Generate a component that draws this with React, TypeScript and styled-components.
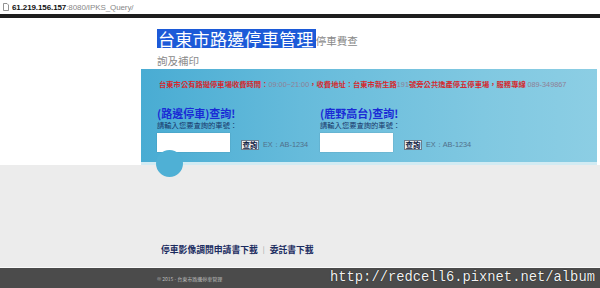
import React from "react";
import styled, { createGlobalStyle } from "styled-components";

const Global = createGlobalStyle`
  html, body { margin: 0; padding: 0; background: #fff; }
  body { width: 600px; height: 288px; overflow: hidden; font-family: "Noto Sans CJK TC", "Liberation Sans", sans-serif; }
  #root { width: 600px; height: 288px; }
`;

const Page = styled.div`
  width: 600px;
  height: 288px;
  display: flex;
  flex-direction: column;
  background: #fff;
`;

const AddressBar = styled.div`
  height: 14px;
  display: flex;
  align-items: center;
  gap: 3px;
  padding-left: 3px;
  background: #fff;
  border-bottom: 4px solid #1e1e1e;
  font-family: "Liberation Sans", Arial, sans-serif;
  font-size: 8px;
  letter-spacing: -0.1px;
`;

const PageIcon = styled.svg`
  width: 6px;
  height: 8px;
`;

const Host = styled.span`
  color: #111;
  font-weight: bold;
`;

const Path = styled.span`
  color: #888;
`;

const Header = styled.div`
  padding: 11px 0 0 157px;
  height: 40px;
  box-sizing: content-box;
`;

const TitleLine = styled.div`
  display: flex;
  align-items: flex-end;
  height: 19px;
`;

const Selected = styled.span`
  background: #1c5ad8;
  color: #fff;
  font-size: 17px;
  line-height: 19px;
  height: 19px;
  padding: 0 2px 0 1px;
  letter-spacing: 0.3px;
  white-space: nowrap;
`;

const SubTitle = styled.span<{ $block?: boolean }>`
  display: ${(p) => (p.$block ? "block" : "inline")};
  color: #8a8a8a;
  font-size: 10.5px;
  line-height: 12px;
  margin-top: ${(p) => (p.$block ? "7px" : "0")};
  margin-bottom: ${(p) => (p.$block ? "0" : "1px")};
  white-space: nowrap;
`;

const PanelWrap = styled.div`
  position: relative;
  margin-left: 141px;
  width: 456px;
`;

const Panel = styled.div`
  height: 96px;
  box-sizing: border-box;
  padding: 10px 0 0 16px;
  background: linear-gradient(to right, #49acd3 0%, #66bbdb 35%, #80c8e1 75%, #8ccee4 100%);
  border-bottom: 3px solid #d2ebf3;
`;

const Tab = styled.div`
  position: absolute;
  left: 15px;
  top: 81px;
  width: 27px;
  height: 27px;
  border-radius: 50%;
  background: #4fb0d5;
`;

const Notice = styled.div`
  font-size: 7.3px;
  line-height: 10px;
  color: #d42a2f;
  font-weight: bold;
  padding-left: 2px;
  white-space: nowrap;
`;

const Num = styled.span`
  color: #8f7f95;
  font-weight: normal;
  font-family: "Liberation Sans", Arial, sans-serif;
`;

const Queries = styled.div`
  display: flex;
  margin-top: 16px;
`;

const Query = styled.div`
  width: 163px;
  display: flex;
  flex-direction: column;
`;

const QTitle = styled.div`
  font-size: 11px;
  line-height: 14px;
  font-weight: bold;
  color: #1a2bd6;
  white-space: nowrap;
`;

const QHint = styled.div`
  font-size: 7.3px;
  line-height: 10px;
  color: #17356a;
  white-space: nowrap;
`;

const QRow = styled.div`
  display: flex;
  align-items: flex-end;
  margin-top: 3px;
`;

const Plate = styled.div`
  width: 73px;
  height: 19px;
  background: #fff;
  box-shadow: 0 0 1px rgba(0, 0, 0, 0.25);
`;

const SearchBtn = styled.div`
  margin-left: 11px;
  margin-bottom: 2px;
  width: 18px;
  height: 10px;
  box-sizing: border-box;
  border: 1px solid #6b7c8c;
  background: #e9edf0;
  color: #112244;
  font-size: 7.5px;
  font-weight: bold;
  line-height: 8px;
  text-align: center;
  white-space: nowrap;
  overflow: hidden;
`;

const Example = styled.div`
  margin-left: 4px;
  margin-bottom: 2px;
  font-family: "Liberation Sans", Arial, sans-serif;
  font-size: 7.3px;
  line-height: 10px;
  color: #51708a;
  white-space: nowrap;
`;

const Lower = styled.div`
  flex: 1;
  background: #ececec;
  display: flex;
  flex-direction: column;
  justify-content: flex-end;
  border-bottom: 1px solid #fafafa;
`;

const Links = styled.div`
  padding: 0 0 12px 161px;
  display: flex;
  align-items: center;
  gap: 5px;
  font-size: 8.8px;
  line-height: 11px;
  font-weight: bold;
  color: #1a2b60;
`;

const Sep = styled.span`
  color: #999;
  font-weight: normal;
  font-size: 7px;
`;

const Footer = styled.div`
  height: 20px;
  background: #4b4b4b;
  display: flex;
  align-items: center;
  padding-left: 157px;
`;

const Copy = styled.span`
  font-size: 5px;
  color: #bdbdbd;
  white-space: nowrap;
  width: 173px;
`;

const Watermark = styled.span`
  font-family: "Liberation Mono", "DejaVu Sans Mono", monospace;
  font-size: 13.8px;
  color: #f2f2f2;
  text-shadow: 0 0 1px #000;
  white-space: nowrap;
  margin-top: -2px;
`;

const queries = [
  { title: "(路邊停車)查詢!" },
  { title: "(鹿野高台)查詢!" },
];

export default function App() {
  return (
    <Page>
      <Global />
      <AddressBar>
        <PageIcon viewBox="0 0 6 8">
          <path d="M0.5 0.5 H4 L5.5 2 V7.5 H0.5 Z" fill="none" stroke="#777" strokeWidth="0.8" />
        </PageIcon>
        <span>
          <Host>61.219.156.157</Host>
          <Path>:8080/IPKS_Query/</Path>
        </span>
      </AddressBar>
      <Header>
        <TitleLine>
          <Selected>台東市路邊停車管理</Selected>
          <SubTitle>停車費查</SubTitle>
        </TitleLine>
        <SubTitle $block>詢及補印</SubTitle>
      </Header>
      <PanelWrap>
        <Panel>
          <Notice>
            台東市公有路邊停車場收費時間：<Num>09:00~21:00</Num>，收費地址：台東市新生路<Num>191</Num>號旁公共造產停五停車場，服務專線 <Num>089-349867</Num>
          </Notice>
          <Queries>
            {queries.map((q) => (
              <Query key={q.title}>
                <QTitle>{q.title}</QTitle>
                <QHint>請輸入您要查詢的車號：</QHint>
                <QRow>
                  <Plate />
                  <SearchBtn>查詢</SearchBtn>
                  <Example>EX：AB-1234</Example>
                </QRow>
              </Query>
            ))}
          </Queries>
        </Panel>
        <Tab />
      </PanelWrap>
      <Lower>
        <Links>
          <span>停車影像調閱申請書下載</span>
          <Sep>|</Sep>
          <span>委託書下載</span>
        </Links>
      </Lower>
      <Footer>
        <Copy>© 2015 - 台東市路邊停車管理</Copy>
        <Watermark>http://redcell6.pixnet.net/album</Watermark>
      </Footer>
    </Page>
  );
}
